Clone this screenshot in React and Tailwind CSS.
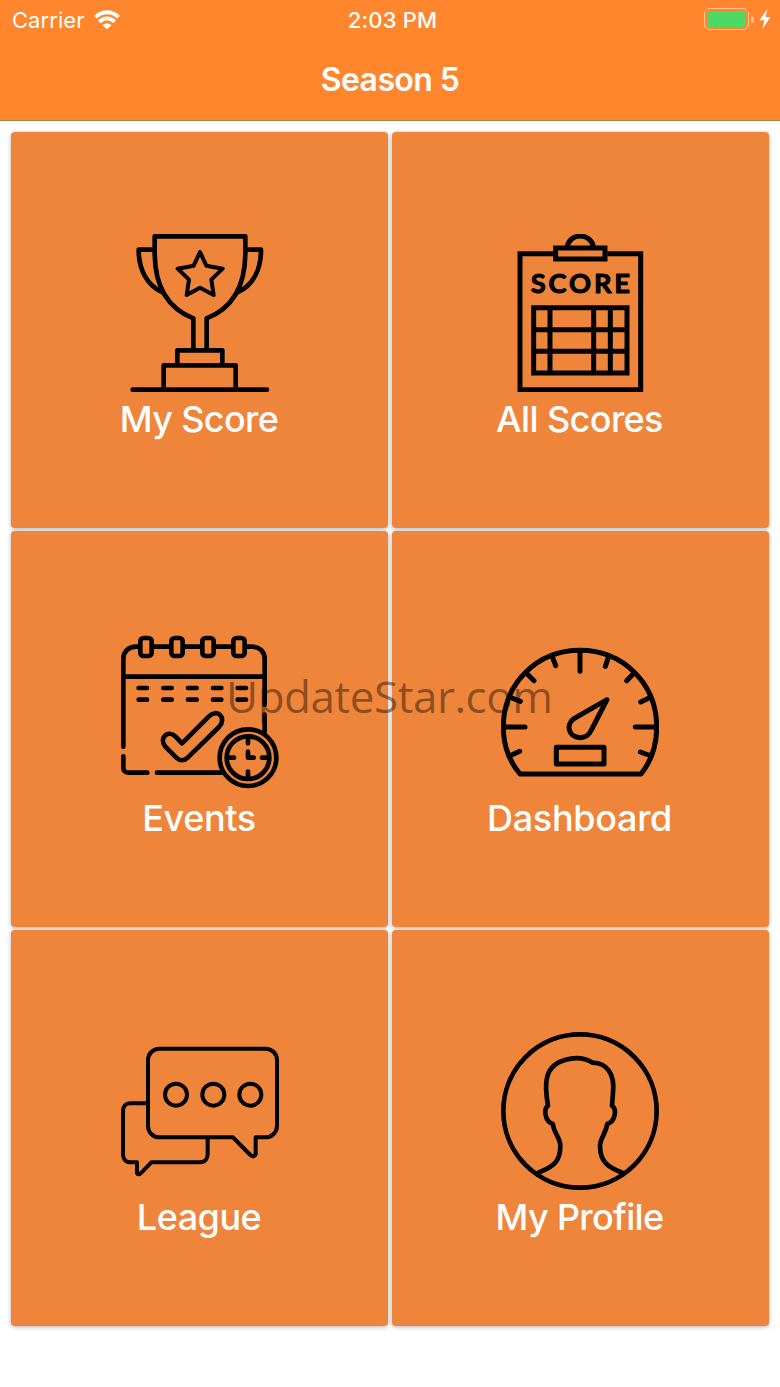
import React from "react";

// Line icons, all drawn on the same 474 unit square
const iconProps = {
    className: "w-[158px] h-[158px] shrink-0",
    fill: "none",
    stroke: "black",
    strokeWidth: 14,
    strokeLinecap: "round",
    strokeLinejoin: "round",
};

function TrophyIcon() {
    return (
        <svg viewBox="33 42 474 474" {...iconProps}>
            <path d="M134 49H406V98C406 190 374 262 290 295V388M134 49V98C134 190 166 262 250 295V388" />
            <path d="M134 89H86C86 145 108 193 155 216M406 89H453C453 145 432 193 385 216" />
            <path d="M270 96L289 137L338 146L304 179L311 225L270 203L230 225L237 179L203 146L251 137Z" strokeWidth="12" />
            <path d="M202 434V391H337V434M161 506V436H377V506M68 509H471" />
        </svg>
    );
}

function ScoreboardIcon() {
    return (
        <svg viewBox="33 42 474 474" {...iconProps} strokeLinecap="butt" strokeLinejoin="miter" strokeWidth={15}>
            <path d="M190 101H90V509H452V101H352" />
            <path d="M197 84H345V117H197Z" />
            <path d="M231 84C236 36 305 36 311 84" />
            <path d="M131 263H411V459H131ZM180 263V459M311 263V459M361 263V459M131 329H411M131 394H411" />
            <text x="122" y="220" textLength="298" lengthAdjust="spacing" fill="black" strokeWidth="3" strokeLinejoin="round" className="font-['Lato'] font-bold text-[82px]">SCORE</text>
        </svg>
    );
}

function EventsIcon() {
    return (
        <svg viewBox="33 39 474 474" {...iconProps}>
            <path d="M40 380V116C40 94 56 80 78 80H86M130 80H179M223 80H272M316 80H365M410 80H426C448 80 464 94 464 116V254M464 284V335M40 170H464" />
            <path d="M40 409V443C40 452 46 458 56 458H112M141 458H338" />
            <rect x="91" y="54" width="34" height="54" rx="10" />
            <rect x="184" y="54" width="34" height="54" rx="10" />
            <rect x="277" y="54" width="34" height="54" rx="10" />
            <rect x="370" y="54" width="34" height="54" rx="10" />
            <path d="M86 204H111M160 204H185M234 204H260M309 204H334M383 204H408M86 239H111M160 239H185M234 239H260M309 239H334M383 239H408" />
            <path d="M216 370L296 290C322 263 352 294 327 321L233 413C222 423 209 423 199 413L166 380C145 354 174 328 197 350Z" />
            <circle cx="414" cy="413" r="85" />
            <circle cx="414" cy="413" r="64" />
            <path d="M414 351V370M414 455V474M352 413H372M456 413H476M414 395V413H431" />
        </svg>
    );
}

function DashboardIcon() {
    return (
        <svg viewBox="33 9 474 474" {...iconProps} strokeWidth={15}>
            <path d="M90 432C57 393 40 344 40 291C40 160 142 61 270 61S500 160 500 291C500 344 484 393 453 432Z" />
            <path d="M270 66V124M45 291H105M496 291H436M188 83L197 107M355 83L346 109M111 131L132 152M430 131L410 152M66 204L91 214M477 204L452 216M65 375L89 364M476 375L451 366" />
            <path d="M351 209L252 266C227 282 234 321 270 323C288 323 298 313 304 300Z" />
            <path d="M199 352H342V402H199Z" />
        </svg>
    );
}

function LeagueIcon() {
    return (
        <svg viewBox="33 6 474 474" {...iconProps} strokeWidth={12}>
            <path d="M148 56H467C486 56 501 71 501 91V287C501 307 486 322 467 322H437V370C437 379 428 381 421 375L369 322H148C129 322 114 307 114 287V91C114 71 129 56 148 56Z" />
            <path d="M114 220H61C47 220 39 229 39 243V373C39 388 47 397 61 397H81V427C81 434 88 434 92 430L124 397H268C284 397 293 388 293 373V325" />
            <circle cx="198" cy="194" r="33" />
            <circle cx="310" cy="194" r="33" />
            <circle cx="421" cy="194" r="33" />
        </svg>
    );
}

function ProfileIcon() {
    return (
        <svg viewBox="33 36 474 474" {...iconProps}>
            <circle cx="270" cy="273" r="230" />
            <path d="M145 458C189 440 211 426 211 378C211 352 193 345 188 311C166 306 159 269 174 257C168 223 167 190 171 174C182 117 263 101 308 128C350 129 375 161 369 218L366 257C382 269 375 306 352 311C348 341 330 354 330 378C330 426 355 442 397 458" />
        </svg>
    );
}

const tiles = [
    { label: "My Score", Icon: TrophyIcon, tracking: "tracking-[-0.65px]" },
    { label: "All Scores", Icon: ScoreboardIcon, tracking: "tracking-[-0.6px]" },
    { label: "Events", Icon: EventsIcon, tracking: "tracking-[-0.4px]" },
    { label: "Dashboard", Icon: DashboardIcon, tracking: "tracking-[-0.3px]" },
    { label: "League", Icon: LeagueIcon, tracking: "tracking-[-0.5px]" },
    { label: "My Profile", Icon: ProfileIcon, tracking: "tracking-[-0.65px]" },
];

function StatusBar() {
    return (
        <div className="grid grid-cols-3 items-center h-10 pl-3 pr-[9px] text-[22px]">
            <div className="flex items-center gap-[10px]">
                <span className="tracking-[0.05px]">Carrier</span>
                <svg viewBox="0 0 78 56" className="w-[26px] h-[19px] -mt-[2px]" fill="none" stroke="white" strokeWidth="12">
                    <path d="M4 21C25 1 53 1 74 21M16 35C30 22 48 22 62 35" />
                    <path d="M25 45C34 38 44 38 53 45L39 57Z" fill="white" stroke="none" />
                </svg>
            </div>
            <span className="pl-[2px] text-center font-medium tracking-[0.2px]">2:03 PM</span>
            <div className="flex items-center justify-end">
                {/* Battery, charging */}
                <div className="w-[45px] h-[22px] p-[2px] -mt-[2px] rounded-[6px] border-[1.5px] border-white/50">
                    <div className="w-full h-full rounded-[3px] bg-[#4cd964]" />
                </div>
                <div className="w-[3px] h-[7px] ml-[2px] -mt-[2px] rounded-r-full bg-white/50" />
                <svg viewBox="0 0 36 60" className="w-3 h-5 ml-[5px] -mt-[2px]" fill="white">
                    <path d="M25 0L1 34H16L10 60L35 24H20Z" />
                </svg>
            </div>
        </div>
    );
}

export default function App() {
    return (
        <div className="relative w-[780px] h-[1387px] overflow-hidden bg-white text-white font-['Inter',sans-serif]">
            <header className="h-[121px] bg-[#ff862c] border-b border-[#b97b4b]">
                <StatusBar />
                <h1 className="text-center text-[32px] leading-[80px] font-semibold tracking-[-0.6px]">Season 5</h1>
            </header>

            <main className="grid grid-cols-2 gap-x-1 gap-y-[3px] px-[11px] pt-[11px]">
                {tiles.map(({ label, Icon, tracking }) => (
                    <div key={label} className="flex flex-col items-center h-[396px] pt-[102px] even:pr-px rounded-[4px] bg-[#ef853a] shadow-[0_1px_4px_rgba(0,0,0,0.3)]">
                        <Icon />
                        <span className={`text-[36px] leading-[54px] font-medium pr-px ${tracking}`}>{label}</span>
                    </div>
                ))}
            </main>

            <div className="absolute top-[666px] left-[226px] text-[44px] leading-[60px] tracking-[-0.45px] whitespace-nowrap text-black/42 font-['Open_Sans',sans-serif]">
                UpdateStar.com
            </div>
        </div>
    );
}
